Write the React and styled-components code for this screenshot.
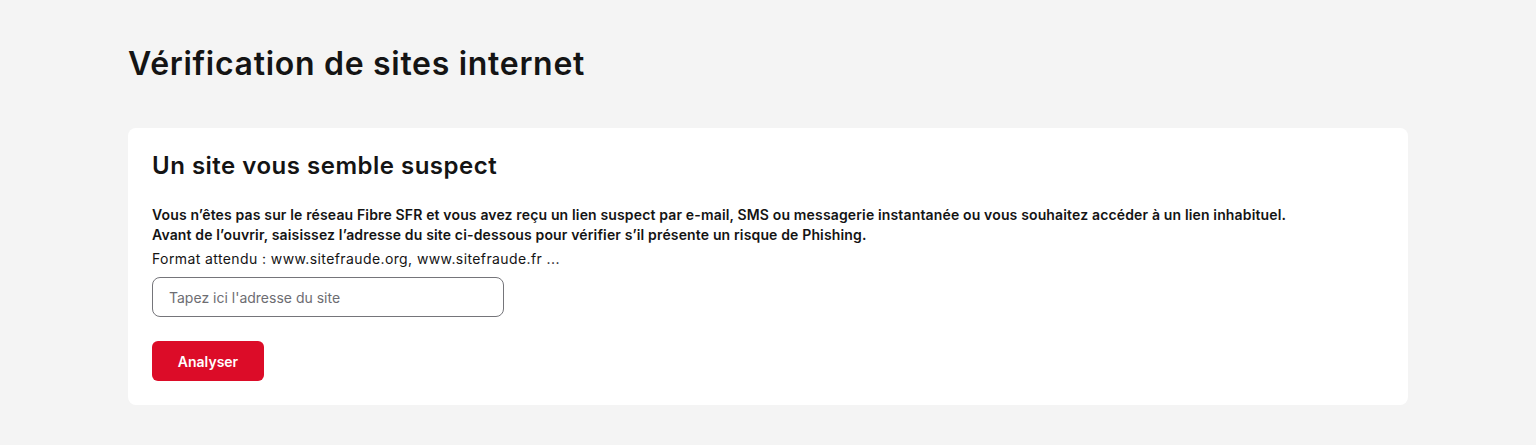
import styled, { createGlobalStyle } from 'styled-components';

const GlobalStyle = createGlobalStyle`
    * {
        box-sizing: border-box;
    }
    body {
        margin: 0;
        background: #f4f4f4;
        font-family: Inter, "Noto Sans", sans-serif;
        color: #141414;
    }
`;

const App = () => {
    return (
        <>
            <GlobalStyle />
            <Page>
                <PageTitle>Vérification de sites internet</PageTitle>
                <Card>
                    <CardTitle>Un site vous semble suspect</CardTitle>
                    <Intro>
                        Vous n’êtes pas sur le réseau Fibre SFR et vous avez reçu un lien suspect par e-mail, SMS ou messagerie instantanée ou vous souhaitez accéder à un lien inhabituel.
                        <br />
                        Avant de l’ouvrir, saisissez l’adresse du site ci-dessous pour vérifier s’il présente un risque de Phishing.
                    </Intro>
                    <Hint>Format attendu : www.sitefraude.org, www.sitefraude.fr ...</Hint>
                    <Form onSubmit = {(e) => e.preventDefault()}>
                        <UrlInput type = 'text' placeholder = "Tapez ici l'adresse du site" />
                        <SubmitButton type = 'submit'>Analyser</SubmitButton>
                    </Form>
                </Card>
            </Page>
        </>
    );
};

const Page = styled.main`
    padding: 40px 128px;
`;

const PageTitle = styled.h1`
    margin: 0 0 40px;
    font-size: 32px;
    line-height: 48px;
    font-weight: 600;
    letter-spacing: 0.7px;
`;

const Card = styled.section`
    background: #fff;
    border-radius: 8px;
    padding: 22px 24px 24px;
`;

const CardTitle = styled.h2`
    margin: 0 0 23px;
    font-size: 24px;
    line-height: 32px;
    font-weight: 600;
    letter-spacing: 0.5px;
`;

const Intro = styled.p`
    margin: 0 0 4px;
    font-size: 14px;
    line-height: 20px;
    font-weight: 600;
    letter-spacing: 0.15px;
`;

const Hint = styled.p`
    margin: 0 0 8px;
    font-size: 14px;
    line-height: 20px;
    font-weight: 400;
    letter-spacing: 0.4px;
`;

const Form = styled.form`
    display: flex;
    flex-direction: column;
    align-items: flex-start;
    gap: 24px;
`;

const UrlInput = styled.input`
    width: 352px;
    height: 40px;
    padding: 0 16px;
    border: 1px solid #75757a;
    border-radius: 8px;
    font: inherit;
    font-size: 14px;
    color: #141414;
    outline: none;
    &::placeholder {
        color: #6d6d72;
    }
`;

const SubmitButton = styled.button`
    width: 112px;
    height: 40px;
    border: none;
    border-radius: 6px;
    background: #dc0c28;
    color: #fff;
    font: inherit;
    font-size: 14px;
    font-weight: 600;
    cursor: pointer;
`;

export default App;
